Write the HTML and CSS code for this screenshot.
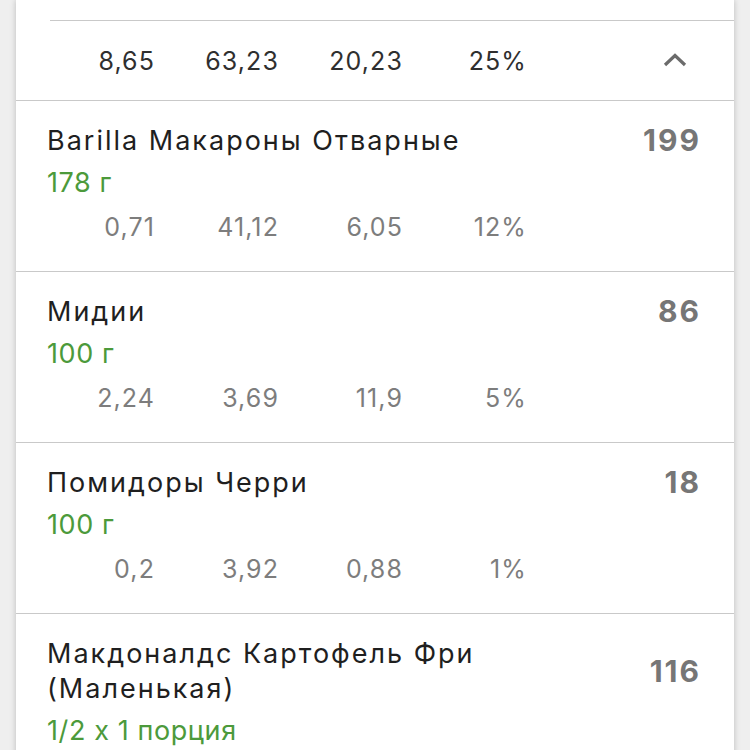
FILE: index.html
```html
<!DOCTYPE html>
<html lang="ru">
<head>
  <meta charset="UTF-8">
  <meta name="viewport" content="width=device-width, initial-scale=1.0">
  <title>Дневник питания</title>
  <link rel="stylesheet" href="styles.css">
</head>
<body>
  <div class="meal-card">
    <!-- Meal totals -->
    <div class="meal-top"></div>
    <div class="meal-summary">
      <div class="macros summary-macros">
        <span>8,65</span>
        <span>63,23</span>
        <span>20,23</span>
        <span>25%</span>
      </div>
      <svg class="chevron" width="24" height="14" viewBox="0 0 24 14">
        <path d="M2 12 L12 2.5 L22 12" fill="none" stroke="#6b6b6b" stroke-width="3.2"/>
      </svg>
    </div>

    <!-- Food items -->
    <div class="food-item">
      <div class="food-head">
        <div class="food-name">Barilla Макароны Отварные</div>
        <div class="food-kcal">199</div>
      </div>
      <div class="food-amount">178 г</div>
      <div class="macros">
        <span>0,71</span>
        <span>41,12</span>
        <span>6,05</span>
        <span>12%</span>
      </div>
    </div>

    <div class="food-item">
      <div class="food-head">
        <div class="food-name">Мидии</div>
        <div class="food-kcal">86</div>
      </div>
      <div class="food-amount">100 г</div>
      <div class="macros">
        <span>2,24</span>
        <span>3,69</span>
        <span>11,9</span>
        <span>5%</span>
      </div>
    </div>

    <div class="food-item">
      <div class="food-head">
        <div class="food-name">Помидоры Черри</div>
        <div class="food-kcal">18</div>
      </div>
      <div class="food-amount">100 г</div>
      <div class="macros">
        <span>0,2</span>
        <span>3,92</span>
        <span>0,88</span>
        <span>1%</span>
      </div>
    </div>

    <div class="food-item">
      <div class="food-head">
        <div class="food-name">Макдоналдс Картофель Фри<br>(Маленькая)</div>
        <div class="food-kcal">116</div>
      </div>
      <div class="food-amount">1/2 x 1 порция</div>
    </div>
  </div>
</body>
</html>
```

FILE: styles.css
```css
* {
  margin: 0;
  padding: 0;
  box-sizing: border-box;
}

body {
  font-family: Inter, "Noto Sans", sans-serif;
  font-feature-settings: "calt" 0;
  background-color: #efefef;
  height: 750px;
  overflow: hidden;
}

/* Card */
.meal-card {
  margin: 0 16px;
  background-color: #fff;
  box-shadow: 0 0 6px rgba(0, 0, 0, 0.22);
}

.meal-top {
  height: 21px;
  margin-left: 34px;
  border-bottom: 1px solid #c9c9c9;
}

.meal-summary {
  height: 80px;
  display: flex;
  align-items: center;
  border-bottom: 1px solid #c9c9c9;
}

.chevron {
  margin-left: auto;
  margin-right: 47px;
  margin-top: -2px;
}

/* Macro columns, right aligned */
.macros {
  display: grid;
  grid-template-columns: repeat(4, 124px);
  padding-left: 15px;
  font-size: 25px;
  line-height: 34px;
  color: #7d7d7d;
  letter-spacing: 1.1px;
}

.macros span {
  text-align: right;
}

.summary-macros {
  color: #2f2f2f;
}

/* Food rows */
.food-item {
  padding: 22px 33px 27px 31px;
  border-bottom: 1px solid #c9c9c9;
}

.food-head {
  display: flex;
  align-items: center;
  justify-content: space-between;
}

.food-name {
  font-size: 27px;
  line-height: 35px;
  letter-spacing: 2px;
  color: #1f1f1f;
}

.food-kcal {
  font-size: 30px;
  line-height: 35px;
  font-weight: 700;
  letter-spacing: 2px;
  color: #767676;
}

.food-amount {
  margin-top: 8px;
  font-size: 27px;
  line-height: 34px;
  letter-spacing: 0.6px;
  color: #4c9a3b;
}

.food-item .macros {
  margin-left: -31px;
  margin-top: 10px;
}
```
